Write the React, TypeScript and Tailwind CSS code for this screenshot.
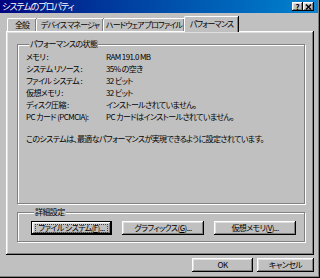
import React from 'react'

const raised =
  'shadow-[inset_-1px_-1px_#000,inset_1px_1px_#fff,inset_-2px_-2px_#808080,inset_2px_2px_#dfdfdf]'

const rows = [
  ['メモリ :', 'RAM 191.0 MB'],
  ['システム リソース :', '35% の空き'],
  ['ファイル システム :', '32 ビット'],
  ['仮想メモリ :', '32 ビット'],
  ['ディスク圧縮 :', 'インストールされていません。'],
  ['PC カード (PCMCIA):', 'PC カードはインストールされていません。'],
]

const tabs = [
  { name: '全般', w: 'w-[29px]' },
  { name: 'デバイス マネージャ', w: 'w-[67px]' },
  { name: 'ハードウェア プロファイル', w: 'w-[81px]' },
]

function Btn({ children, className = '', focused = false }: { children: React.ReactNode; className?: string; focused?: boolean }) {
  if (focused) {
    return (
      <div className={`h-[14px] border border-black bg-[#c0c0c0] ${className}`}>
        <div className={`h-full flex items-center justify-center ${raised}`}>
          <span className="w-[73px] h-[9px] flex items-center justify-center whitespace-nowrap leading-none text-black border border-dotted border-[#404040]">
            {children}
          </span>
        </div>
      </div>
    )
  }
  return (
    <div className={`h-[14px] flex items-center justify-center whitespace-nowrap leading-none ${raised} ${className}`}>
      {children}
    </div>
  )
}

export default function App() {
  return (
    <div className="w-[320px] h-[278px] bg-[#c0c0c0] flex flex-col text-[8px] tracking-[-0.6px] text-black font-['Noto_Sans_CJK_JP',sans-serif] [font-feature-settings:'palt'] shadow-[inset_-1px_-1px_#000,inset_-2px_-2px_#808080]">
      {/* Title bar */}
      <div className="h-[13px] mr-[2px] flex items-center bg-linear-to-r from-[#000080] to-[#1084d0] pl-[2px] pr-[4px]">
        <span className="text-white leading-none text-[9px] tracking-[-1px]">システムのプロパティ</span>
        <div className="ml-auto flex">
          <div className={`w-[11px] h-[9px] flex items-center justify-center bg-[#c0c0c0] ${raised}`}>
            <span className="text-[8px] tracking-normal font-bold leading-none">?</span>
          </div>
          <div className={`w-[11px] h-[9px] flex items-center justify-center bg-[#c0c0c0] ${raised}`}>
            <svg width="7" height="6" viewBox="0 0 7 6">
              <path d="M1 0.5 L6 5.5 M6 0.5 L1 5.5" stroke="#000" strokeWidth="1.4" />
            </svg>
          </div>
        </div>
      </div>

      <div className="flex-1 flex flex-col px-[6px]">
        {/* Tabs */}
        <div className="mt-[2px] h-[16px] flex items-end tracking-[-0.9px]">
          {tabs.map((t, i) => (
            <div
              key={t.name}
              className={`${t.w} ${i === 0 ? 'ml-[1px]' : ''} h-[13px] flex items-center justify-center whitespace-nowrap leading-none border-t border-l border-white rounded-tl-[2px] shadow-[inset_-1px_0_#808080,1px_0_#000]`}
            >
              {t.name}
            </div>
          ))}
          <div className="relative z-10 w-[54px] h-[16px] -mb-px flex items-start pt-[3px] justify-center whitespace-nowrap leading-none bg-[#c0c0c0] border-t border-l border-white rounded-tl-[2px] shadow-[inset_-1px_0_#808080,1px_0_#000]">
            パフォーマンス
          </div>
        </div>

        {/* Panel */}
        <div className={`w-[308px] h-[224px] pl-[11px] pt-[8px] ${raised}`}>
          <fieldset className="w-[288px] h-[165px] border border-[#808080] shadow-[inset_1px_1px_#fff,1px_1px_#fff] pl-[8px] pt-[2px]">
            <legend className="ml-[3px] px-[1px] bg-[#c0c0c0] leading-[10px]">パフォーマンスの状態</legend>
            <div className="flex flex-col">
              {rows.map(([k, v]) => (
                <div key={k} className="flex leading-[12px]">
                  <span className="w-[80px] shrink-0 whitespace-nowrap">{k}</span>
                  <span className="whitespace-nowrap">{v}</span>
                </div>
              ))}
              <div className="mt-[10px] leading-[12px] whitespace-nowrap">
                このシステムは、最適なパフォーマンスが実現できるように設定されています。
              </div>
            </div>
          </fieldset>

          <fieldset className="mt-[3px] w-[288px] h-[35px] border border-[#808080] shadow-[inset_1px_1px_#fff,1px_1px_#fff] pl-[13px] pt-[4px]">
            <legend className="ml-[3px] px-[1px] bg-[#c0c0c0] leading-[10px]">詳細設定</legend>
            <div className="flex gap-[10px]">
              <Btn focused className="w-[81px]">
                ファイル システム(<span className="underline">F</span>)...
              </Btn>
              <Btn className="w-[82px]">
                グラフィックス(<span className="underline">G</span>)...
              </Btn>
              <Btn className="w-[82px]">
                仮想メモリ(<span className="underline">V</span>)...
              </Btn>
            </div>
          </fieldset>
        </div>

        {/* Bottom buttons */}
        <div className="mt-[3px] flex justify-end gap-[4px]">
          <Btn className="w-[61px]">OK</Btn>
          <Btn className="w-[57px]">キャンセル</Btn>
        </div>
      </div>
    </div>
  )
}
